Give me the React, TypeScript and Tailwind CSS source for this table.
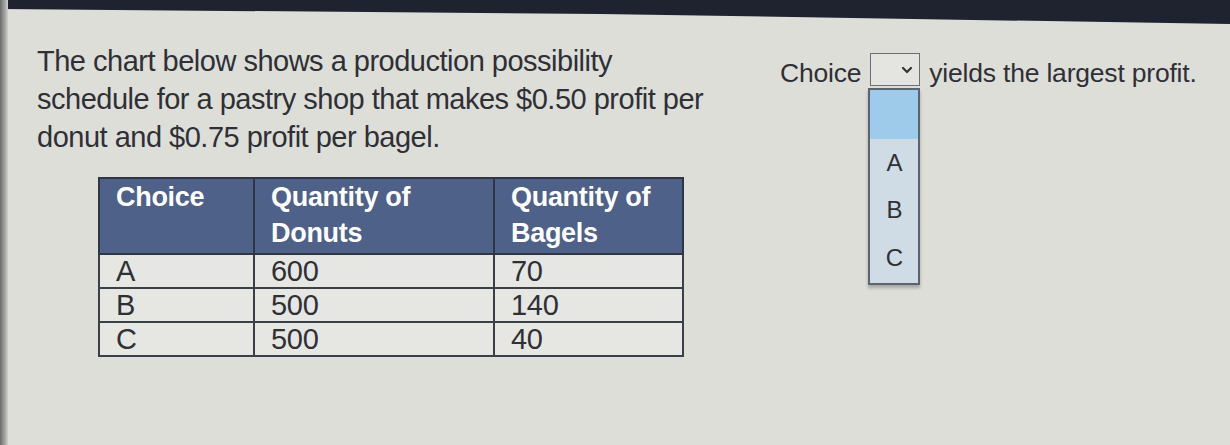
import React from "react";

const font = { fontFamily: '"Liberation Sans", Arial, sans-serif' };

export default function App() {
  const rows = [
    ["A", "600", "70"],
    ["B", "500", "140"],
    ["C", "500", "40"],
  ];
  return (
    <div
      className="relative w-[1230px] h-[445px] overflow-hidden bg-[#dedeD9] text-[#2e3036]"
      style={font}
    >
      {/* photo frame edges */}
      <svg className="absolute left-0 top-0" width="1230" height="30" viewBox="0 0 1230 30">
        <polygon points="0,0 1230,0 1230,24 600,14 0,9" fill="#1f2330" />
      </svg>
      <div className="absolute left-0 top-0 h-full w-[8px] bg-gradient-to-r from-[#6b6b6b] to-[#cfcfcb]" />

      <div className="flex pt-[42px] pl-[37px]">
        <div className="w-[735px]">
          <p className="text-[29px] leading-[38px] tracking-[-0.5px]">
            The chart below shows a production possibility
            <br />
            schedule for a pastry shop that makes $0.50 profit per
            <br />
            donut and $0.75 profit per bagel.
          </p>
          <table className="mt-[21px] ml-[61px] border-collapse border-2 border-[#3a3f4a] text-[27px] tracking-[-0.3px]">
            <thead>
              <tr className="bg-[#4d6189] text-white align-top">
                <th className="w-[155px] h-[76px] border-2 border-[#2f3645] px-[16px] pt-0 text-left font-bold leading-[36px]">Choice</th>
                <th className="w-[240px] border-2 border-[#2f3645] px-[16px] pt-0 text-left font-bold leading-[36px]">
                  Quantity of
                  <br />
                  Donuts
                </th>
                <th className="w-[189px] border-2 border-[#2f3645] px-[16px] pt-0 text-left font-bold leading-[36px]">
                  Quantity of
                  <br />
                  Bagels
                </th>
              </tr>
            </thead>
            <tbody>
              {rows.map((r) => (
                <tr key={r[0]} className="h-[34px] bg-[#e6e6e2]">
                  {r.map((c, i) => (
                    <td key={i} className="border-2 border-[#3a3f4a] px-[16px] py-0 leading-[30px] text-[29px]">
                      {c}
                    </td>
                  ))}
                </tr>
              ))}
            </tbody>
          </table>
        </div>

        <div className="ml-[8px] flex items-start pt-[11px] text-[26.5px] tracking-[-0.2px]">
          <span className="mt-[1px]">Choice</span>
          <div className="relative ml-[9px]">
            <div className="flex h-[33px] w-[50px] items-center justify-end border border-[#6a6e76] bg-[#e4e4e0] pr-[6px]">
              <svg width="12" height="8" viewBox="0 0 12 8">
                <path d="M2 2 L6 6 L10 2" stroke="#333" strokeWidth="2.2" fill="none" strokeLinecap="round" />
              </svg>
            </div>
            <div className="absolute left-[-2px] top-[35px] w-[52px] border-2 border-[#5b6270] bg-[#cfdbe5] shadow-[0_3px_3px_rgba(0,0,0,0.25)]">
              <div className="h-[49px] bg-[#9fcbea]" />
              <div className="flex h-[47px] items-center justify-center text-[24px]">A</div>
              <div className="flex h-[47px] items-center justify-center text-[24px]">B</div>
              <div className="flex h-[50px] items-center justify-center text-[24px]">C</div>
            </div>
          </div>
          <span className="ml-[9px] mt-[1px]">yields the largest profit.</span>
        </div>
      </div>
    </div>
  );
}
